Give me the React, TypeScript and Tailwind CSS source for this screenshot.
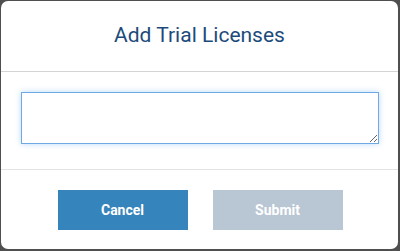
export default function App() {
  return (
    <div className="h-[251px] w-[400px] bg-[#4f4f4f] pl-px pt-px pr-[2px] pb-[2px] font-['Roboto',sans-serif]">
      <div className="flex h-full w-full flex-col overflow-hidden rounded-[7px] bg-white">
        <div className="flex h-[71px] items-center justify-center border-b border-[#d4d4d4]">
          <h2 className="pb-px text-[21px] leading-none text-[#1c4b7b]">Add Trial Licenses</h2>
        </div>
        <div className="h-[98px] border-b border-[#e3e3e3] px-5 pt-5">
          <textarea
            className="block h-[52px] w-[358px] resize-y border border-[#6ea9e6] bg-white shadow-[0_0_6px_rgba(102,170,238,0.45)] outline-none"
            autoFocus
          />
        </div>
        <div className="flex justify-center gap-[25px] pt-5 pl-px">
          <button className="h-10 w-[130px] bg-[#3584bc] text-[14px] font-bold text-white">Cancel</button>
          <button className="h-10 w-[130px] bg-[#b9c6d4] text-[14px] font-bold text-white" disabled>
            Submit
          </button>
        </div>
      </div>
    </div>
  );
}
